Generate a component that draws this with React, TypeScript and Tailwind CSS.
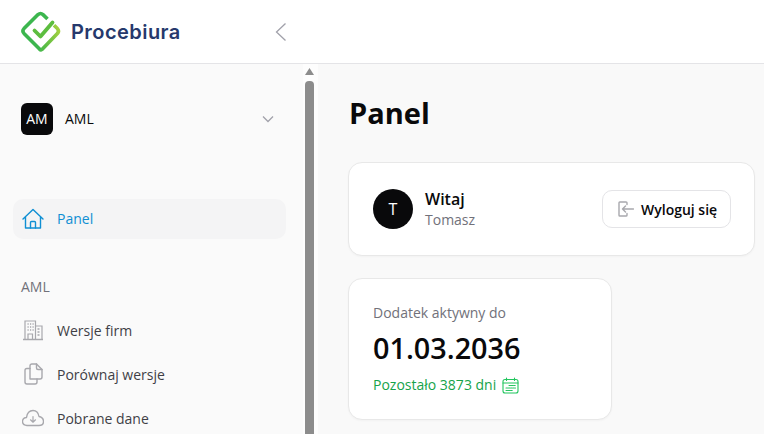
import React from "react";

function Logo() {
  return (
    <svg width="42" height="42" viewBox="0 0 42 42" fill="none" className="shrink-0">
      <defs>
        <linearGradient id="a" x1="10" y1="30" x2="40" y2="20" gradientUnits="userSpaceOnUse">
          <stop offset="0" stopColor="#37b54f" />
          <stop offset="0.45" stopColor="#5dbd45" />
          <stop offset="1" stopColor="#a5d13f" />
        </linearGradient>
      </defs>
      <path d="M20.5 39 L4 22.4 Q1.8 20 4 17.6 L18 3.6 Q20.5 1.4 23 3.6 L27.5 8" stroke="#3cb64e" strokeWidth="3.6" strokeLinejoin="round" />
      <path d="M20 38.4 Q20.7 39.4 22 38.4 L37.4 22.6 Q39.6 20 37.4 17.6 L34 14.2" stroke="url(#a)" strokeWidth="3.6" strokeLinejoin="round" />
      <path d="M14.5 19.5 L20.5 25.5 L32.5 11.5" stroke="#5cbd3f" strokeWidth="3.8" strokeLinecap="round" strokeLinejoin="round" />
    </svg>
  );
}

function Home() {
  return (
    <svg width="22" height="22" viewBox="0 0 22 22" fill="none" stroke="#0f8fd3" strokeWidth="1.4" strokeLinejoin="round" strokeLinecap="round">
      <path d="M1 11 L11 1.5 L21 11 M3.5 9 V20 H18.5 V9" />
      <path d="M8.5 20 V14.5 Q8.5 13.5 9.5 13.5 H12.5 Q13.5 13.5 13.5 14.5 V20" />
    </svg>
  );
}

function Building() {
  return (
    <svg width="22" height="22" viewBox="0 0 22 22" fill="none" stroke="#a8a8ad" strokeWidth="1.2">
      <path d="M1 20.5 H21" strokeWidth="1.5" />
      <path d="M3 20.5 V2 H13.5 V20.5 M13.5 7 H20 V20.5" />
      <path d="M5.5 5 H6.7 M8 5 H9.2 M10.5 5 H11.7 M5.5 8 H6.7 M8 8 H9.2 M10.5 8 H11.7 M5.5 11 H6.7 M8 11 H9.2 M10.5 11 H11.7 M15.5 10 H17.5 M15.5 13 H17.5 M15.5 16 H17.5" strokeWidth="1.4" />
      <path d="M6 20.5 V15 H10.5 V20.5" />
    </svg>
  );
}

function Copy() {
  return (
    <svg width="22" height="22" viewBox="0 0 22 22" fill="none" stroke="#a8a8ad" strokeWidth="1.4" strokeLinejoin="round" strokeLinecap="round">
      <path d="M8 16 V3 Q8 1 10 1 H14.5 L20 6.5 V14 Q20 16 18 16 Z" />
      <path d="M14.5 1 V5 Q14.5 6.5 16 6.5 H20" />
      <path d="M8 5.5 H5 Q3 5.5 3 7.5 V19 Q3 21 5 21 H13 Q15 21 15 19 V16" />
    </svg>
  );
}

function Cloud() {
  return (
    <svg width="22" height="22" viewBox="0 0 22 22" fill="none" stroke="#a8a8ad" strokeWidth="1.4" strokeLinecap="round" strokeLinejoin="round">
      <path d="M5 18.5 Q0.5 18 0.5 14.5 Q0.5 11 4.5 10.5 Q5.5 3.5 11 3.5 Q16 3.5 17 9.5 Q21.5 10.5 21.5 14.5 Q21.5 18.5 17 18.5 Z" />
      <path d="M11 9.5 V15 M8.5 12.8 L11 15.2 L13.5 12.8" strokeWidth="1.2" />
    </svg>
  );
}

function Logout() {
  return (
    <svg width="16" height="16" viewBox="0 0 16 16" fill="none" stroke="#a8a8ad" strokeWidth="1.4" strokeLinecap="round" strokeLinejoin="round">
      <path d="M9 3.5 V1.8 Q9 1 8 1 H1.8 Q1 1 1 1.8 V14.2 Q1 15 1.8 15 H8 Q9 15 9 14.2 V12.5" />
      <path d="M15.5 8 H4.5 M7.5 5 L4.5 8 L7.5 11" />
    </svg>
  );
}

function Calendar() {
  return (
    <svg width="17" height="17" viewBox="0 0 17 17" fill="none" stroke="#22c55e" strokeWidth="1.1" strokeLinecap="round">
      <rect x="1" y="2.5" width="15" height="13.5" rx="2" />
      <path d="M1 6 H16 M4.5 1 V3.5 M12.5 1 V3.5" />
      <path d="M7 8.5 H13.5 M4 11 H13.5 M4 13.5 H10.5" strokeDasharray="1.6 0.7" />
    </svg>
  );
}

function NavItem({ icon, label }: { icon: React.ReactNode; label: string }) {
  return (
    <div className="flex items-center h-[44px] pl-[22px]">
      <span className="w-[22px] flex justify-center">{icon}</span>
      <span className="ml-[13px] text-[14px] text-[#3f3f46]">{label}</span>
    </div>
  );
}

export default function App() {
  return (
    <div className="w-[764px] h-[434px] overflow-hidden flex flex-col bg-[#f9f9f9] font-['Open_Sans',sans-serif]">
      <header className="h-[64px] shrink-0 flex bg-white border-b border-[#e4e4e7]">
        <div className="w-[303px] flex items-center pl-[20px]">
          <Logo />
          <span className="ml-[9px] text-[20px] font-semibold tracking-[0.45px] text-[#26396c] font-['Inter',sans-serif]">Procebiura</span>
          <svg width="12" height="20" viewBox="0 0 12 20" fill="none" stroke="#a1a1aa" strokeWidth="1.3" className="ml-auto mr-[16px]">
            <path d="M10.5 1.5 L1.5 10 L10.5 18.5" />
          </svg>
        </div>
      </header>
      <div className="flex flex-1 min-h-0">
        <aside className="w-[303px] shrink-0 bg-[#fafafa] flex flex-col overflow-hidden">
          <div className="flex items-center shrink-0 h-[32px] mt-[39px] pl-[21px] pr-[29px]">
            <div className="w-[32px] h-[32px] rounded-[6px] bg-[#09090b] text-white text-[14px] pb-[2px] flex items-center justify-center">AM</div>
            <span className="ml-[12px] text-[14px] text-[#09090b] pb-[2px]">AML</span>
            <svg width="12" height="8" viewBox="0 0 12 8" fill="none" stroke="#a1a1aa" strokeWidth="1.3" className="ml-auto">
              <path d="M1 1.5 L6 6.5 L11 1.5" />
            </svg>
          </div>
          <div className="ml-[13px] mr-[17px] shrink-0 mt-[64px] h-[40px] rounded-[10px] bg-[#f4f4f5] flex items-center pl-[9px]">
            <Home />
            <span className="ml-[13px] pb-[2px] text-[14px] text-[#0f8fd3]">Panel</span>
          </div>
          <div className="mt-[38px] shrink-0 pl-[21px] text-[14px] text-[#71717a] leading-[20px]">AML</div>
          <div className="mt-[11px] shrink-0">
            <NavItem icon={<Building />} label="Wersje firm" />
            <NavItem icon={<Copy />} label="Porównaj wersje" />
            <NavItem icon={<Cloud />} label="Pobrane dane" />
          </div>
        </aside>
        <div className="w-[15px] shrink-0 bg-[#fdfdfd] flex flex-col items-start pl-[2px]">
          <svg width="9" height="7" viewBox="0 0 9 7" className="mt-[4px]" fill="#8c8c8c"><path d="M4.5 0 L9 7 H0 Z" /></svg>
          <div className="mt-[6px] w-[9px] flex-1 bg-[#8c8c8c] rounded-t-[4px]" />
        </div>
        <main className="flex-1 pl-[30px] pr-[9px] flex flex-col items-start">
          <h1 className="mt-[28px] ml-[1px] text-[29px] leading-[42px] font-bold text-[#09090b]">Panel</h1>
          <section className="mt-[28px] w-full h-[94px] bg-white rounded-[14px] border border-[#e8e8e8] flex items-center pl-[24px] pr-[23px] shadow-[0_1px_2px_rgba(0,0,0,0.03)]">
            <div className="w-[40px] h-[40px] rounded-full bg-[#09090b] text-white text-[16px] flex items-center justify-center">T</div>
            <div className="ml-[12px]">
              <div className="text-[16px] leading-[22px] font-semibold text-[#09090b]">Witaj</div>
              <div className="text-[14px] leading-[20px] text-[#71717a]">Tomasz</div>
            </div>
            <button className="ml-auto h-[38px] pl-[15px] pr-[12px] w-[129px] rounded-[10px] border border-[#e4e4e7] bg-white flex items-center gap-[7px] text-[14px] font-semibold text-[#09090b]">
              <Logout />
              Wyloguj się
            </button>
          </section>
          <section className="mt-[22px] w-[264px] h-[142px] bg-white rounded-[14px] border border-[#e8e8e8] pl-[24px] pt-[24px] shadow-[0_1px_2px_rgba(0,0,0,0.03)]">
            <div className="text-[14px] leading-[20px] text-[#71717a]">Dodatek aktywny do</div>
            <div className="mt-[7px] text-[28.8px] leading-[36px] font-semibold text-[#09090b]">01.03.2036</div>
            <div className="mt-[9px] flex items-center gap-[6px] text-[14px] leading-[20px] text-[#16a34a]">
              Pozostało 3873 dni
              <Calendar />
            </div>
          </section>
        </main>
      </div>
    </div>
  );
}
